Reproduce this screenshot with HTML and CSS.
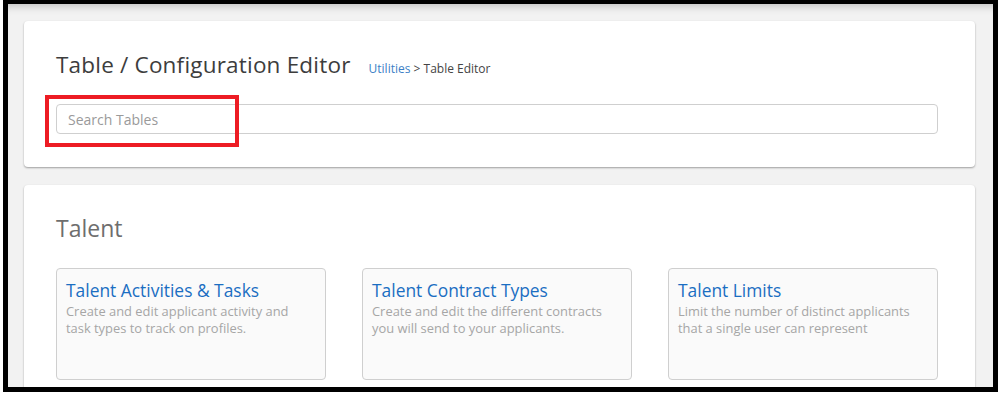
FILE: index.html
```html
<!DOCTYPE html>
<html lang="en">
<head>
  <meta charset="UTF-8">
  <meta name="viewport" content="width=device-width, initial-scale=1.0">
  <title>Table / Configuration Editor</title>
  <link rel="stylesheet" href="styles.css">
</head>
<body>
  <div class="frame">
    <main class="page">

      <section class="card header-card">
        <div class="title-row">
          <h1>Table / Configuration Editor</h1>
          <nav class="crumbs"><a href="#">Utilities</a> &gt; Table Editor</nav>
        </div>
        <div class="search-wrap">
          <input type="text" class="search-input" placeholder="Search Tables">
          <span class="highlight"></span>
        </div>
      </section>

      <section class="card group-card">
        <h2>Talent</h2>
        <div class="tiles">
          <a class="tile" href="#">
            <h3>Talent Activities &amp; Tasks</h3>
            <p>Create and edit applicant activity and task types to track on profiles.</p>
          </a>
          <a class="tile" href="#">
            <h3>Talent Contract Types</h3>
            <p>Create and edit the different contracts you will send to your applicants.</p>
          </a>
          <a class="tile" href="#">
            <h3>Talent Limits</h3>
            <p>Limit the number of distinct applicants that a single user can represent</p>
          </a>
        </div>
      </section>

    </main>
  </div>
</body>
</html>
```

FILE: styles.css
```css
:root {
  --page-bg: #f2f2f2;
  --title-color: #3d3d3d;
  --group-color: #6e6e6e;
  --link-blue: #1b6ec2;
  --crumb-blue: #3c7fc6;
  --muted: #a6a6a6;
  --line: #cfcfcf;
}

html, body {
  margin: 0;
  padding: 0;
  background: #fff;
  height: 395px;
  overflow: hidden;
}

body {
  font-family: "Open Sans", "Noto Sans", sans-serif;
  color: var(--title-color);
}

.frame {
  box-sizing: border-box;
  height: 392px;
  margin: 0 5px 0 3px;
  border: 5px solid #000;
  border-top-width: 4px;
  background: var(--page-bg);
  box-shadow: inset 0 9px 8px -7px rgba(0, 0, 0, 0.22);
  overflow: hidden;
}

.page {
  padding: 17px 18px 0 16px;
}

.card {
  background: #fff;
  border-radius: 4px;
  box-shadow: 0 1px 2px rgba(0, 0, 0, 0.35);
  padding: 0 37px 0 32px;
}

.header-card {
  padding-top: 29px;
  padding-bottom: 33px;
  margin-bottom: 18px;
}

.title-row {
  display: flex;
  align-items: baseline;
  gap: 18px;
}

.title-row h1 {
  margin: 0;
  font-size: 22.5px;
  line-height: 30px;
  font-weight: 400;
  color: var(--title-color);
  letter-spacing: 0.2px;
}

.crumbs {
  font-size: 12px;
  color: #444;
}

.crumbs a {
  color: var(--crumb-blue);
  text-decoration: none;
}

.search-wrap {
  position: relative;
  margin-top: 24px;
}

.search-input {
  display: block;
  box-sizing: border-box;
  width: 100%;
  height: 30px;
  padding: 0 11px;
  border: 1px solid var(--line);
  border-radius: 4px;
  font-family: inherit;
  font-size: 14px;
  color: #333;
  background: #fff;
}

.search-input::placeholder {
  color: #9a9a9a;
}

/* annotation box drawn over the search field */
.highlight {
  position: absolute;
  left: -11px;
  top: -9px;
  width: 194px;
  height: 52px;
  box-sizing: border-box;
  border: 4px solid #ed1c24;
  pointer-events: none;
}

.group-card {
  padding-top: 28px;
  padding-bottom: 20px;
}

.group-card h2 {
  margin: 0 0 25px;
  font-size: 23px;
  line-height: 30px;
  font-weight: 400;
  color: var(--group-color);
}

.tiles {
  display: grid;
  grid-template-columns: repeat(3, 270px);
  justify-content: space-between;
}

.tile {
  display: block;
  box-sizing: border-box;
  height: 112px;
  padding: 10px 9px;
  border: 1px solid var(--line);
  border-radius: 4px;
  background: #fafafa;
  text-decoration: none;
}

.tile h3 {
  margin: 0;
  font-size: 17.4px;
  line-height: 22px;
  font-weight: 400;
  color: var(--link-blue);
}

.tile p {
  max-width: 240px;
  margin: 2px 0 0;
  font-size: 12.9px;
  line-height: 17px;
  color: var(--muted);
}
```
